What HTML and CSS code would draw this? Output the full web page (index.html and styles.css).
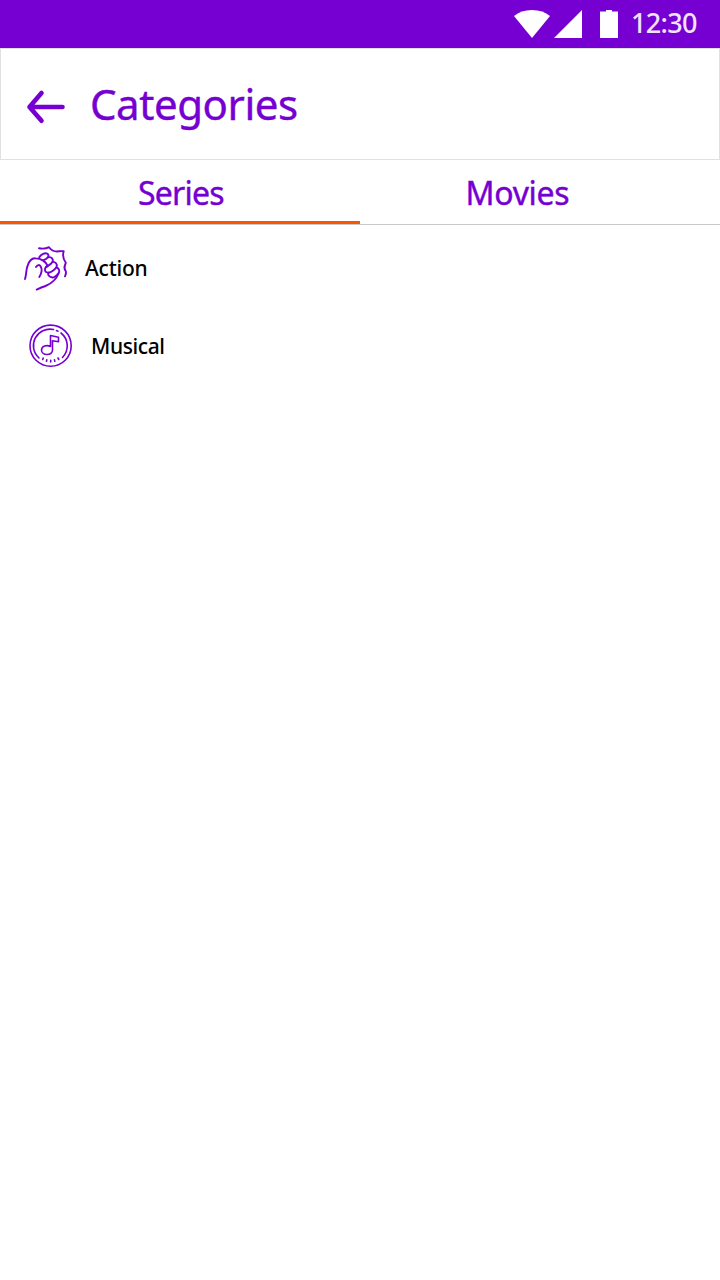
FILE: index.html
```html
<!DOCTYPE html>
<html lang="en">
<head>
<meta charset="utf-8">
<title>Categories</title>
<link rel="stylesheet" href="styles.css">
</head>
<body>
<div class="status-bar">
  <svg class="status-icons" width="106" height="48" viewBox="0 0 106 48" fill="#fff">
    <path d="M0 16Q7 10 18 10T36 16L18 38Z"/>
    <path d="M40 38L68 10V38Z"/>
    <path d="M86 11.5H92V10H98V11.5H104V38H86Z"/>
  </svg>
  <span class="clock">12:30</span>
</div>
<header class="app-bar">
  <svg class="back" width="42" height="36" viewBox="0 0 42 36" fill="none" stroke="#7600d1" stroke-width="4.6" stroke-linecap="round" stroke-linejoin="round">
    <path d="M16.500 4L4.500 18L16.500 31.800M4.500 18H37.500"/>
  </svg>
  <h1 class="title">Categories</h1>
</header>
<nav class="tabs">
  <a class="tab active"><span class="tab-label series">Series</span></a>
  <a class="tab"><span class="tab-label movies">Movies</span></a>
</nav>
<main class="list">
  <div class="item action">
    <svg class="icon" width="60" height="60" viewBox="0 0 60 60" fill="none" stroke="#7600d1" stroke-width="1.9" stroke-linecap="round" stroke-linejoin="round">
      <path d="M9 41C10.500 37 10 31 11.700 27.500C13.500 22 16 20 19.500 20.300C25 20.500 30.500 23.500 31.500 28.500"/>
      <path d="M23 10.300C27 11 30 10.800 33 9.200C35.500 12.500 38.500 14 43 13.300Q45 13 47.700 13.200C46.500 17 47 21 49.800 24.800C48.500 28 47.500 30 49.700 33Q50.500 35 49 38.300"/>
      <path d="M23.300 19.300C25 16.500 29 14 31.500 15.800C34 18 31 21 27.500 22.200"/>
      <path d="M32.500 19.300C35.500 18.500 37.800 21.200 36.500 24C35 26.500 32.500 27.500 30 29"/>
      <path d="M36.500 24C39 23.500 41.800 26 40.500 29C39 31.500 35 34.500 32.500 34.700C28 34.500 28.500 30.500 30 29"/>
      <path d="M40.500 29.500C43.500 30.500 44.200 33.500 42 35.800C40.500 37.500 38.500 39.500 36.500 39.500C32.500 39 31.500 36.500 32.500 34.700"/>
      <path d="M42.800 35C40.500 41 35.500 45.500 29.500 48C26 49.200 23.500 50.300 20.700 51.600M20 29C21.500 26.800 23.300 26.300 24.600 28.300C26.300 31 25.800 35 23.300 39"/>
    </svg>
    <span class="item-label">Action</span>
  </div>
  <div class="item musical">
    <svg class="icon" width="60" height="60" viewBox="0 0 60 60" fill="none" stroke="#7600d1" stroke-width="1.6" stroke-linecap="round" stroke-linejoin="round">
      <circle cx="30.600" cy="29.700" r="20.600"/>
      <path d="M19 42A16.500 16.500 0 0 1 33.500 13.500M36.500 14.500L38 15.200M41 17A16.500 16.500 0 0 1 42.500 41.500"/>
      <path d="M30.500 19.500L38.500 21.200V25.800L32.500 24.700V34C32.500 40.500 21.500 39.500 21.500 34.200C21.500 30.200 26.500 28.500 30.500 30.500Z"/>
      <path d="M23.200 42L22.700 43.500M26.800 43.800L26.500 45.300M30.700 44.300V46M34.500 43.800L34.800 45.300M38 42L38.800 43.500"/>
    </svg>
    <span class="item-label">Musical</span>
  </div>
</main>
</body>
</html>
```
FILE: styles.css
```css
* { box-sizing: border-box; }
body {
  margin: 0;
  min-height: 1280px;
  background: #fff;
  color: #000;
  font-family: "Noto Sans", "Open Sans", sans-serif;
}
svg { display: block; flex: none; }
.status-bar {
  display: flex;
  height: 48px;
  padding-left: 514px;
  background: #7600d1;
}
.clock {
  margin-left: 11px;
  font-size: 27px;
  font-weight: 500;
  line-height: 46px;
  letter-spacing: -0.7px;
  color: #f1e2fb;
}
.app-bar {
  display: flex;
  align-items: flex-start;
  height: 112px;
  padding-left: 24px;
  border: 1px solid #e0e0e0;
}
.back { margin-top: 40px; }
.title {
  margin: 0 0 0 23px;
  color: #7600d1;
  font-size: 42px;
  font-weight: 400;
  line-height: 109px;
  letter-spacing: -0.45px;
  -webkit-text-stroke: 0.4px #7600d1;
}
.tabs {
  display: flex;
  height: 65px;
  border-bottom: 1px solid #c8c8c8;
}
.tab {
  flex: 1;
  color: #7600d1;
  font-size: 32px;
  line-height: 65px;
  letter-spacing: -0.3px;
  -webkit-text-stroke: 0.4px #7600d1;
}
.tab.active {
  border-bottom: 3px solid #fc5500;
  margin-right: 1px;
}
.tab-label { display: block; }
.series {
  padding-left: 138px;
  letter-spacing: -0.8px;
}
.movies { padding-left: 105px; }
.list { padding-top: 13px; }
.item {
  display: flex;
  align-items: center;
  height: 60px;
  font-size: 21px;
  font-weight: 500;
  letter-spacing: -0.2px;
}
.item + .item { margin-top: 18px; }
.action { padding-left: 16px; }
.musical { padding-left: 20px; }
.action .item-label { margin-left: 9px; }
.musical .item-label {
  margin-left: 11px;
  letter-spacing: -0.4px;
}
```
